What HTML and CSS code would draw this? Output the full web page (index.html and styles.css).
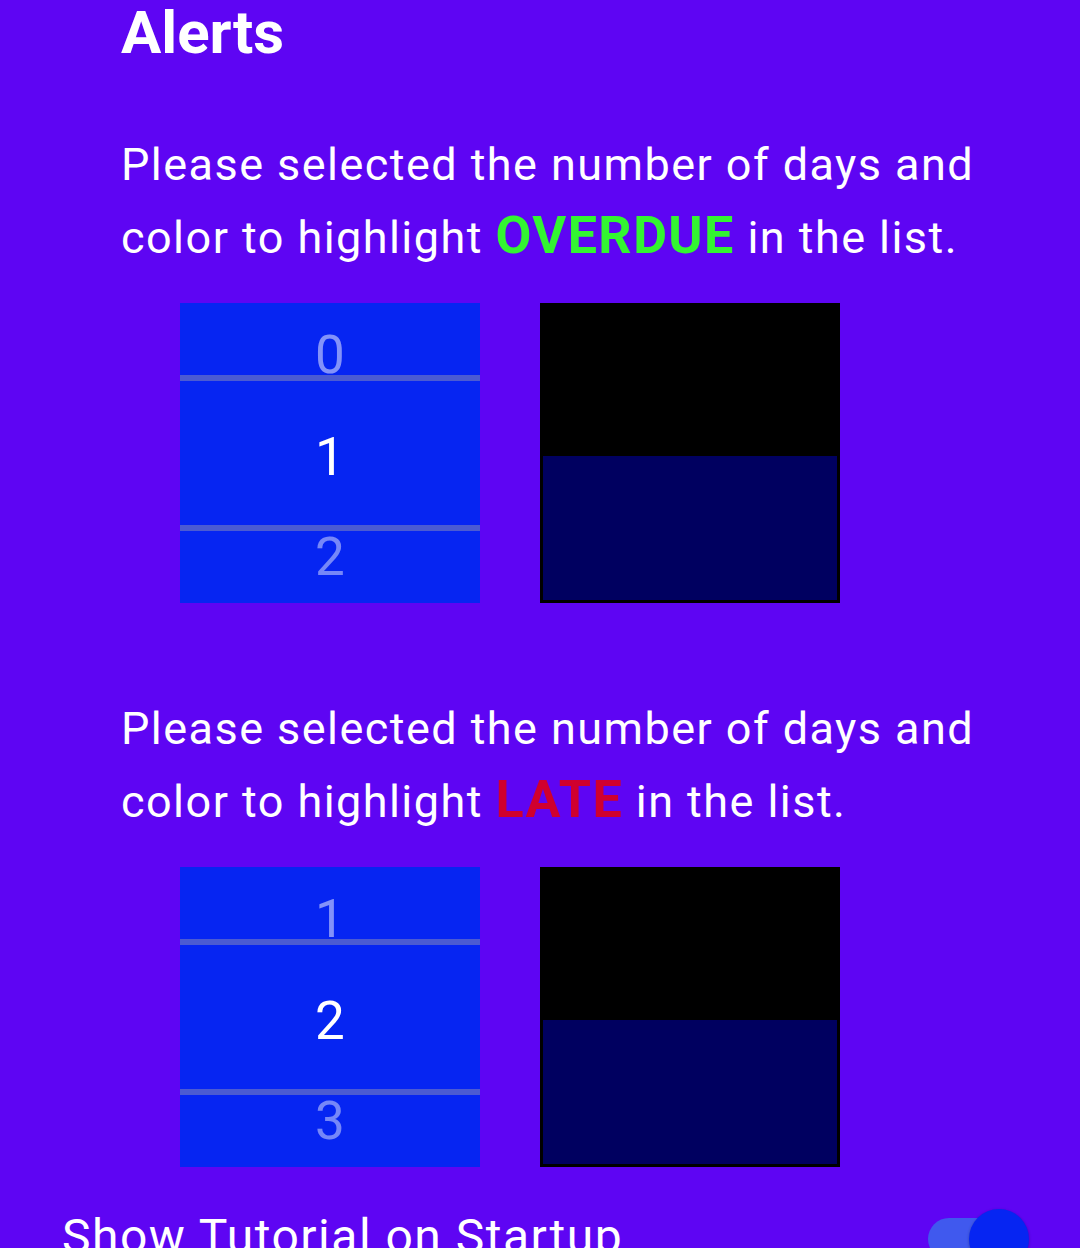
FILE: index.html
```html
<!DOCTYPE html>
<html>
<head>
<meta charset="utf-8">
<link rel="stylesheet" href="styles.css">
</head>
<body>
<div class="page">
  <h1 class="title">Alerts</h1>

  <p class="prompt">Please selected the number of days and<br>color to highlight <span class="overdue">OVERDUE</span> in the list.</p>
  <div class="pickers">
    <div class="picker">
      <div class="item item-top">0</div>
      <div class="divider"></div>
      <div class="item item-mid">1</div>
      <div class="divider"></div>
      <div class="item item-bot">2</div>
    </div>
    <div class="swatch">
      <div class="swatch-top"></div>
      <div class="swatch-bot"></div>
    </div>
  </div>

  <p class="prompt prompt-second">Please selected the number of days and<br>color to highlight <span class="late">LATE</span> in the list.</p>
  <div class="pickers">
    <div class="picker">
      <div class="item item-top">1</div>
      <div class="divider"></div>
      <div class="item item-mid">2</div>
      <div class="divider"></div>
      <div class="item item-bot">3</div>
    </div>
    <div class="swatch">
      <div class="swatch-top"></div>
      <div class="swatch-bot"></div>
    </div>
  </div>

  <div class="setting">
    <span class="setting-label">Show Tutorial on Startup</span>
    <div class="switch">
      <div class="track"></div>
      <div class="thumb"></div>
    </div>
  </div>
</div>
</body>
</html>
```

FILE: styles.css
```css
html, body {
  margin: 0;
  padding: 0;
  background: #5e05f3;
  height: 100%;
  overflow: hidden;
}
.page {
  font-family: Roboto, "Noto Sans", sans-serif;
  color: #ffffff;
}
.title {
  margin: 0;
  padding-left: 121px;
  font-size: 60px;
  line-height: 66px;
  font-weight: 700;
}
.prompt {
  margin: 62px 0 0 0;
  padding-left: 121px;
  font-size: 45px;
  line-height: 73px;
  letter-spacing: 1.45px;
  white-space: nowrap;
}
.prompt-second {
  margin-top: 89px;
}
.overdue,
.late {
  font-size: 52px;
  line-height: 1;
  font-weight: 700;
}
.overdue {
  color: #33f531;
}
.late {
  color: #d0002e;
}
.pickers {
  display: flex;
  gap: 60px;
  padding-left: 180px;
  margin-top: 29px;
}
.picker {
  width: 300px;
  height: 300px;
  background: #0625f2;
  display: flex;
  flex-direction: column;
  text-align: center;
  font-size: 53px;
  line-height: 40px;
}
.item {
  box-sizing: border-box;
}
.item-top {
  height: 72px;
  padding-top: 32px;
  color: rgba(255, 255, 255, 0.5);
}
.item-mid {
  height: 144px;
  padding-top: 56px;
}
.item-bot {
  height: 72px;
  padding-top: 6px;
  color: rgba(255, 255, 255, 0.45);
}
.divider {
  height: 6px;
  background: #4b5bd2;
}
.swatch {
  width: 300px;
  height: 300px;
  box-sizing: border-box;
  border: 3px solid #000000;
  display: flex;
  flex-direction: column;
}
.swatch-top {
  height: 150px;
  background: #000000;
}
.swatch-bot {
  flex: 1;
  background: #000060;
}
.setting {
  display: flex;
  justify-content: space-between;
  align-items: flex-start;
  margin-top: 33px;
  padding: 0 50px 0 62px;
}
.setting-label {
  font-size: 48px;
  line-height: 73px;
  letter-spacing: 1.5px;
}
.switch {
  position: relative;
  width: 102px;
  height: 60px;
  margin-top: 9px;
}
.track {
  position: absolute;
  left: 0;
  top: 9px;
  width: 94px;
  height: 42px;
  border-radius: 21px;
  background: #4059ee;
}
.thumb {
  position: absolute;
  left: 41px;
  top: 0;
  width: 60px;
  height: 60px;
  border-radius: 50%;
  background: #0625f2;
  box-shadow: 0 1px 3px rgba(0, 0, 0, 0.3);
}
```
